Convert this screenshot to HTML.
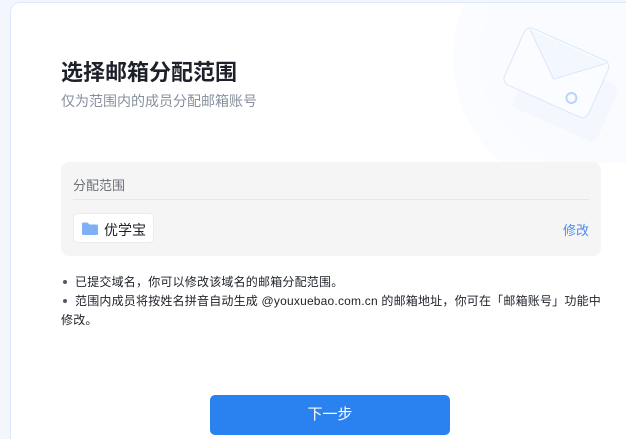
<!DOCTYPE html>
<html><head><meta charset="utf-8"><style>
*{margin:0;padding:0;box-sizing:border-box}
html,body{width:626px;height:439px;overflow:hidden}
body{background:#f3f7fd;font-family:"Liberation Sans","Noto Sans CJK SC",sans-serif;position:relative}
.card{position:absolute;left:10px;top:2px;width:616px;height:437px;background:#fff;border:1px solid #dde9fb;border-right:none;border-bottom:none;border-radius:10px 0 0 0;overflow:hidden}
.abs{position:absolute}
.title{left:50px;top:52px;font-size:22px;font-weight:bold;color:#1d2129}
.sub{left:50px;top:88px;font-size:14px;color:#86909c}
.box{left:50px;top:159px;width:540px;height:94px;background:#f5f5f6;border-radius:8px}
.lab{left:12px;top:13px;font-size:13px;color:#6b7079}
.div{left:12px;top:37px;width:516px;height:1px;background:#e5e6e8}
.chip{left:12px;top:51px;width:81px;height:30px;background:#fff;border:1px solid #ebecee;border-radius:5px;font-size:14px;color:#1d2129;padding:6px 0 0 30px}
.edit{right:12px;top:58px;font-size:13px;color:#4a8cf0}
.notes{left:50px;top:270px;width:540px;font-size:12px;color:#1d2129;line-height:19px;letter-spacing:0.2px}
.dot{display:inline-block;width:4px;height:4px;border-radius:50%;background:#4e5969;vertical-align:middle;margin:0 8px 2px 2px}
.btn{left:199px;top:392px;width:240px;height:40px;background:#2a82f0;border-radius:5px;color:#fff;font-size:15px;text-align:center;line-height:40px}
</style></head><body>
<div class="card">
<svg class="abs" style="left:400px;top:0" width="216" height="160" viewBox="0 0 216 160">
<circle cx="180" cy="55" r="138" fill="#fbfcff"/>
<circle cx="180" cy="55" r="112" fill="#f9fbff"/>
<g transform="translate(144,68) rotate(24)">
<rect x="-34" y="-22" width="92" height="62" rx="7" fill="#f2f6fd" opacity="0.8" transform="translate(8,10)"/>
<rect x="-44" y="-30" width="92" height="62" rx="7" fill="#fafcff" stroke="#dae7fa" stroke-width="1"/>
<path d="M-40,-28 L2,8 L44,-28" fill="#f3f7fe" stroke="#dae7fa" stroke-width="1"/>
<circle cx="26" cy="18" r="5" fill="none" stroke="#bcd5f6" stroke-width="2"/>
</g>
</svg>
<div class="abs title">选择邮箱分配范围</div>
<div class="abs sub">仅为范围内的成员分配邮箱账号</div>
<div class="abs box">
<div class="abs lab">分配范围</div>
<div class="abs div"></div>
<div class="abs chip"><svg class="abs" style="left:8px;top:8px" width="16" height="13" viewBox="0 0 16 13"><path d="M0 2a1.5 1.5 0 0 1 1.5-1.5h4l2 2h7A1.5 1.5 0 0 1 16 4v7.5A1.5 1.5 0 0 1 14.5 13h-13A1.5 1.5 0 0 1 0 11.5z" fill="#7fb0f5"/></svg>优学宝</div>
<div class="abs edit">修改</div>
</div>
<div class="abs notes">
<div><span class="dot"></span>已提交域名，你可以修改该域名的邮箱分配范围。</div>
<div><span class="dot"></span>范围内成员将按姓名拼音自动生成 @youxuebao.com.cn 的邮箱地址，你可在「邮箱账号」功能中修改。</div>
</div>
<div class="abs btn">下一步</div>
</div>
</body></html>
